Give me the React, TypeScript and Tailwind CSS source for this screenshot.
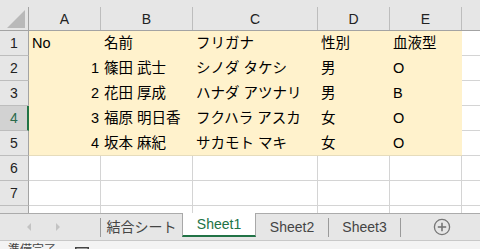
import React from "react";

const data: string[][] = [
  ["No", "名前", "フリガナ", "性別", "血液型"],
  ["1", "篠田 武士", "シノダ タケシ", "男", "O"],
  ["2", "花田 厚成", "ハナダ アツナリ", "男", "B"],
  ["3", "福原 明日香", "フクハラ アスカ", "女", "O"],
  ["4", "坂本 麻紀", "サカモト マキ", "女", "O"],
];

const letters = ["A", "B", "C", "D", "E"];
const gridCols = "grid grid-cols-[29px_72px_92px_125px_72px_72px_1fr]";

function RowHeader({ n, selected }: { n: number; selected?: boolean }) {
  return selected ? (
    <div className="flex items-center justify-center bg-[#d2d2d2] border-r-2 border-r-[#217346] border-b border-b-[#bdbdbd] text-[#2b6a4c] pl-[1px]">
      {n}
    </div>
  ) : (
    <div className="flex items-center justify-center bg-[#e6e6e6] border-r border-r-[#a3a3a3] border-b border-b-[#bdbdbd] text-[#222]">
      {n}
    </div>
  );
}

export default function App() {
  return (
    <div className="w-[480px] h-[249px] overflow-hidden bg-white font-['Liberation_Sans','Noto_Sans_CJK_JP',sans-serif] text-[14px] leading-none">
      {/* top strip */}
      <div className="h-[7px] bg-[#e6e6e6]" />
      {/* column header */}
      <div className={`${gridCols} h-[24px] bg-[#e6e6e6] border-b border-b-[#a3a3a3]`}>
        <div className="relative border-r border-r-[#a3a3a3]">
          <svg className="absolute left-0 top-0" width="28" height="23" viewBox="0 0 28 23">
            <polygon points="7,21 25,21 25,3" fill="#b9b9b9" />
          </svg>
        </div>
        {letters.map((l) => (
          <div key={l} className="flex items-center justify-center border-r border-r-[#bdbdbd] text-[#222]">
            {l}
          </div>
        ))}
        <div />
      </div>
      {/* data rows */}
      {data.map((row, ri) => (
        <div key={ri} className={`${gridCols} h-[25px]`}>
          <RowHeader n={ri + 1} selected={ri === 3} />
          {row.map((c, ci) => {
            const numeric = ci === 0 && ri > 0;
            return (
              <div
                key={ci}
                className={`flex items-center bg-[#fff2cc] text-[14.5px] text-black whitespace-nowrap ${
                  numeric ? "justify-end pr-[2px]" : "pl-[3px]"
                } ${ri === 4 ? "border-b border-b-[#e6dcbc]" : ""}`}
              >
                {c}
              </div>
            );
          })}
          <div className="border-b border-b-[#d4d4d4]" />
        </div>
      ))}
      {[6, 7].map((n) => (
        <div key={n} className={`${gridCols} h-[25px]`}>
          <RowHeader n={n} />
          {letters.map((l) => (
            <div key={l} className="border-r border-r-[#d4d4d4] border-b border-b-[#d4d4d4]" />
          ))}
          <div className="border-b border-b-[#d4d4d4]" />
        </div>
      ))}
      {/* partial row 8 */}
      <div className={`${gridCols} h-[7px]`}>
        <div className="bg-[#e6e6e6] border-r border-r-[#a3a3a3]" />
        {letters.map((l) => (
          <div key={l} className="border-r border-r-[#d4d4d4]" />
        ))}
        <div />
      </div>
      {/* tab bar */}
      <div className="flex h-[28px] bg-[#e6e6e6] border-t border-t-[#ababab] border-b border-b-[#c8c8c8] text-[14px]">
        <div className="flex w-[100px] items-center">
          <svg className="ml-[26px]" width="6" height="10" viewBox="0 0 6 10">
            <polygon points="5,1 1,5 5,9" fill="#c3c3c3" />
          </svg>
          <svg className="ml-[23px]" width="6" height="10" viewBox="0 0 6 10">
            <polygon points="1,1 5,5 1,9" fill="#c3c3c3" />
          </svg>
        </div>
        <div className="mt-[4px] h-[19px] w-px bg-[#9a9a9a]" />
        <div className="flex w-[81px] items-center justify-center text-[#444]">結合シート</div>
        <div className="-mt-px flex h-[24px] w-[74px] items-center justify-center bg-white border-x border-x-[#a8a8a8] border-b-2 border-b-[#217346] text-[#217346]">
          Sheet1
        </div>
        <div className="flex w-[72px] items-center justify-center text-[#444]">Sheet2</div>
        <div className="mt-[4px] h-[19px] w-px bg-[#9a9a9a]" />
        <div className="flex w-[71px] items-center justify-center text-[#444]">Sheet3</div>
        <div className="mt-[4px] h-[19px] w-px bg-[#9a9a9a]" />
        <div className="flex flex-1 items-center pl-[32px]">
          <svg width="18" height="18" viewBox="0 0 18 18">
            <circle cx="9" cy="9" r="7.6" fill="none" stroke="#767676" strokeWidth="1.3" />
            <line x1="9" y1="4.8" x2="9" y2="13.2" stroke="#767676" strokeWidth="1.6" />
            <line x1="4.8" y1="9" x2="13.2" y2="9" stroke="#767676" strokeWidth="1.6" />
          </svg>
        </div>
      </div>
      {/* status bar */}
      <div className="flex h-[22px] items-start bg-[#f3f3f3] pt-[3px] pl-[8px] text-[12px] text-[#444]">
        <span>準備完了</span>
        <svg className="ml-[19px] mt-[3px]" width="14" height="12" viewBox="0 0 14 12">
          <rect x="0.75" y="0.75" width="12.5" height="10.5" fill="none" stroke="#444" strokeWidth="1.5" />
        </svg>
      </div>
    </div>
  );
}
